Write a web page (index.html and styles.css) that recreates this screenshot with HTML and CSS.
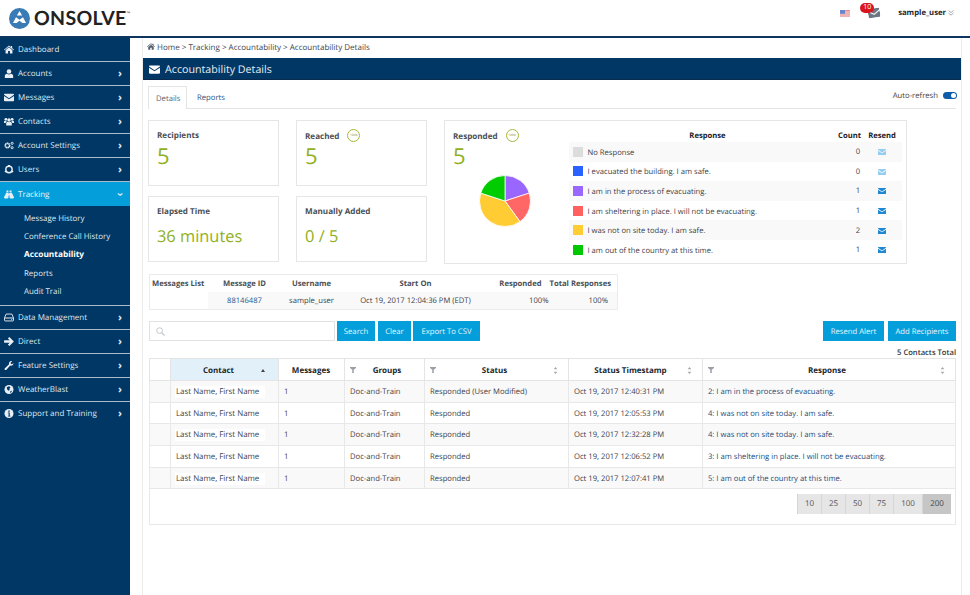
FILE: index.html
```html
<!DOCTYPE html>
<html lang="en">
<head>
<meta charset="utf-8">
<title>Accountability Details</title>
<link rel="stylesheet" href="styles.css">
</head>
<body>
<svg class="defs" width="0" height="0" aria-hidden="true">
  <symbol id="i-mail" viewBox="0 0 16 12"><path d="M0 1.2C0 .5.5 0 1.2 0h13.6c.7 0 1.2.5 1.2 1.2v.5L8 7 0 1.7zM0 3.4V10.800c0 .7.5 1.200 1.200 1.200h13.600c.7 0 1.200-.5 1.200-1.200V3.400L8 8.700z"/></symbol>
  <symbol id="i-home" viewBox="0 0 16 13"><path d="M8 0l3 2.500V1h2v3.200L16 6.700l-.8.9L8 1.700.8 7.600 0 6.700zM2.500 7.500L8 3l5.500 4.500V13H9.500V9h-3v4h-4z"/></symbol>
  <symbol id="i-user" viewBox="0 0 12 13"><circle cx="6" cy="3.500" r="3.300"/><path d="M0 13V9.500C0 8 1.500 7 3 6.700 4 7.500 5 7.800 6 7.800s2-.3 3-1.100c1.500.3 3 1.300 3 2.800V13z"/></symbol>
  <symbol id="i-users" viewBox="0 0 16 13"><circle cx="8" cy="4" r="2.700"/><circle cx="3" cy="3" r="2.200"/><circle cx="13" cy="3" r="2.200"/><path d="M3.500 13V9.500C3.500 8 5 7 6 7c1.300.8 2.700.8 4 0 1 0 2.500 1 2.500 2.500V13zM0 9V7c0-1 .8-1.600 1.600-1.600 1 .6 2 .6 3 .2C4 6.200 3 7.200 2.800 9zM16 9V7c0-1-.8-1.600-1.600-1.600-1 .6-2 .6-3 .2.600.6 1.600 1.600 1.800 3.400z"/></symbol>
  <symbol id="i-cogs" viewBox="0 0 16 13"><circle cx="5.500" cy="6.500" r="3.500" fill="none" stroke="currentColor" stroke-width="2.600" stroke-dasharray="2.200 .5"/><circle cx="13" cy="3" r="1.700" fill="none" stroke="currentColor" stroke-width="1.500"/><circle cx="13" cy="10" r="1.700" fill="none" stroke="currentColor" stroke-width="1.500"/></symbol>
  <symbol id="i-ring" viewBox="0 0 13 13"><circle cx="6.500" cy="6.500" r="4.600" fill="none" stroke="currentColor" stroke-width="2"/><path d="M5 0h3v2.500H5zM0 9l2-1 1 2-2 1zM13 9l-2-1-1 2 2 1z"/></symbol>
  <symbol id="i-binoc" viewBox="0 0 16 13"><path d="M4 0h3v3H4zM9 0h3v3H9zM3.500 3.500h3.700v7.500c0 1-.7 1.800-1.700 1.800H1.500C.5 12.800 0 12 0 11zM9 3.500h3.500L16 11c0 1-.5 1.800-1.500 1.800h-4c-1 0-1.700-.8-1.700-1.800zM7 5h2v3H7z"/></symbol>
  <symbol id="i-hdd" viewBox="0 0 14 11"><path d="M3 .7h8L13.300 6v3.500c0 .5-.4.8-.8.8h-11c-.4 0-.8-.3-.8-.8V6z" fill="none" stroke="currentColor" stroke-width="1.300"/><path d="M1 5.500h12v1.300H1zM10 8h1.500v1H10z"/></symbol>
  <symbol id="i-arrow" viewBox="0 0 13 12"><path d="M7 0l6 6-6 6-2-2 2.500-2.300H0V4.300h7.500L5 2z"/></symbol>
  <symbol id="i-wrench" viewBox="0 0 13 13"><path d="M12.800 2.800c.5 2.200-1.300 4.200-3.500 3.900-.4 0-.8-.1-1.100-.3L2.800 12.500c-.7.7-1.700.7-2.300 0-.6-.6-.6-1.600.1-2.200L6.600 4.800C6 3 7 1 8.800.4 9.500.1 10.300.1 11 .3L8.900 2.400l.4 1.900 1.700.4z"/></symbol>
  <symbol id="i-globe" viewBox="0 0 12 12"><circle cx="6" cy="6" r="6"/><path d="M3 3l3-1.500L8 3 6.500 5 7 6.500 5 7.500 3.500 5.500zM8 8l2-.5L8.500 10.500 7.500 10z" fill="#003764"/></symbol>
  <symbol id="i-info" viewBox="0 0 12 12"><circle cx="6" cy="6" r="6"/><path d="M5 2h2v1.800H5zM4.500 4.800H7V9h1v1H4.500V9h1V5.800h-1z" fill="#003764"/></symbol>
  <symbol id="i-filter" viewBox="0 0 8 8"><path d="M0 0h8v1.300L5 3.500V8H3V3.500L0 1.300z"/></symbol>
  <symbol id="i-sort" viewBox="0 0 6 9"><path d="M3 0l2.400 3H.6zM3 9L.6 6h4.800z"/></symbol>
</svg>

<header class="topbar">
  <div class="logo">
    <svg class="logo-mark" viewBox="0 0 24 24" aria-hidden="true"><circle cx="12" cy="12" r="12" fill="#3a7bb5"/><path d="M12 3.500l3 5.200H9zM8 10.500L4.500 17h4.200l3.300-2.500 3.300 2.500h4.200L16 10.500l-4 3z" fill="#fff"/></svg>
    <span class="logo-text">ONSOLVE</span><span class="logo-tm">™</span>
  </div>
  <div class="top-right">
    <svg class="flag" viewBox="0 0 10 7" aria-hidden="true"><rect width="10" height="7" fill="#e88a8a"/><path d="M0 1.500h10v1H0zM0 3.500h10v1H0zM0 5.500h10v1H0z" fill="#f3dede"/><rect width="5" height="3.800" fill="#6a86c8"/></svg>
    <span class="notif">
      <svg class="notif-mail" aria-hidden="true"><use href="#i-mail"/></svg>
      <span class="badge">10</span>
    </span>
    <span class="top-user">sample_user</span>
    <svg class="top-caret" viewBox="0 0 7 7" aria-hidden="true"><path d="M.5.500l3 2.500 3-2.500M.5 3.500l3 2.500 3-2.500" fill="none" stroke="currentColor" stroke-width=".9"/></svg>
  </div>
</header>

<div class="shell">
  <nav class="sidebar">
    <a class="nav-item"><svg class="nav-icon" aria-hidden="true"><use href="#i-home"/></svg><span class="nav-label">Dashboard</span></a>
    <a class="nav-item"><svg class="nav-icon" aria-hidden="true"><use href="#i-user"/></svg><span class="nav-label">Accounts</span><span class="chev">›</span></a>
    <a class="nav-item"><svg class="nav-icon" aria-hidden="true"><use href="#i-mail"/></svg><span class="nav-label">Messages</span><span class="chev">›</span></a>
    <a class="nav-item"><svg class="nav-icon" aria-hidden="true"><use href="#i-users"/></svg><span class="nav-label">Contacts</span><span class="chev">›</span></a>
    <a class="nav-item"><svg class="nav-icon" aria-hidden="true"><use href="#i-cogs"/></svg><span class="nav-label">Account Settings</span><span class="chev">›</span></a>
    <a class="nav-item"><svg class="nav-icon" aria-hidden="true"><use href="#i-ring"/></svg><span class="nav-label">Users</span><span class="chev">›</span></a>
    <a class="nav-item is-active"><svg class="nav-icon" aria-hidden="true"><use href="#i-binoc"/></svg><span class="nav-label">Tracking</span><span class="chev chev-down">›</span></a>
    <div class="subnav">
      <a class="sub-item">Message History</a>
      <a class="sub-item">Conference Call History</a>
      <a class="sub-item is-current">Accountability</a>
      <a class="sub-item">Reports</a>
      <a class="sub-item">Audit Trail</a>
    </div>
    <a class="nav-item"><svg class="nav-icon" aria-hidden="true"><use href="#i-hdd"/></svg><span class="nav-label">Data Management</span><span class="chev">›</span></a>
    <a class="nav-item"><svg class="nav-icon" aria-hidden="true"><use href="#i-arrow"/></svg><span class="nav-label">Direct</span><span class="chev">›</span></a>
    <a class="nav-item"><svg class="nav-icon" aria-hidden="true"><use href="#i-wrench"/></svg><span class="nav-label">Feature Settings</span><span class="chev">›</span></a>
    <a class="nav-item"><svg class="nav-icon" aria-hidden="true"><use href="#i-globe"/></svg><span class="nav-label">WeatherBlast</span><span class="chev">›</span></a>
    <a class="nav-item no-rule"><svg class="nav-icon" aria-hidden="true"><use href="#i-info"/></svg><span class="nav-label">Support and Training</span><span class="chev">›</span></a>
  </nav>

  <main class="main">
    <div class="crumbs"><svg class="crumb-home" aria-hidden="true"><use href="#i-home"/></svg> Home &gt; Tracking &gt; Accountability &gt; Accountability Details</div>
    <div class="panel">
      <h1 class="title-bar"><svg class="title-icon" aria-hidden="true"><use href="#i-mail"/></svg>Accountability Details</h1>
      <div class="panel-body">
        <div class="tabs">
          <span class="tab is-open">Details</span>
          <span class="tab">Reports</span>
          <span class="auto-refresh">Auto-refresh <span class="toggle"></span></span>
        </div>

        <section class="stats">
          <div class="stat-grid">
            <div class="card"><div class="card-label">Recipients</div><div class="card-num">5</div></div>
            <div class="card"><div class="card-label has-ring">Reached <span class="ring">100%</span></div><div class="card-num">5</div></div>
            <div class="card"><div class="card-label">Elapsed Time</div><div class="card-val">36 minutes</div></div>
            <div class="card"><div class="card-label">Manually Added</div><div class="card-val">0 / 5</div></div>
          </div>
          <div class="card card-wide">
            <div class="pie-side">
              <div class="card-label has-ring">Responded <span class="ring">100%</span></div>
              <div class="card-num">5</div>
              <svg class="pie" viewBox="-26 -26 52 52" aria-hidden="true">
                <g stroke="#fff" stroke-width=".8">
                  <path d="M0 0L0-25.500A25.500 25.500 0 0 1 24.250-7.880z" fill="#9966ff"/>
                  <path d="M0 0L24.250-7.880A25.500 25.500 0 0 1 14.990 20.630z" fill="#ff6666"/>
                  <path d="M0 0L14.990 20.630A25.500 25.500 0 0 1-24.250-7.880z" fill="#ffcc33"/>
                  <path d="M0 0L-24.250-7.880A25.500 25.500 0 0 1 0-25.500z" fill="#00cc00"/>
                </g>
              </svg>
            </div>
            <div class="legend">
              <div class="lg-head"><span class="lg-main">Response</span><span class="lg-count">Count</span><span class="lg-send">Resend</span></div>
              <div class="lg-row"><span class="lg-main"><span class="swatch sw-none"></span>No Response</span><span class="lg-count">0</span><span class="lg-send"><svg class="env env-off" aria-hidden="true"><use href="#i-mail"/></svg></span></div>
              <div class="lg-row"><span class="lg-main"><span class="swatch sw-blue"></span>I evacuated the building. I am safe.</span><span class="lg-count">0</span><span class="lg-send"><svg class="env env-off" aria-hidden="true"><use href="#i-mail"/></svg></span></div>
              <div class="lg-row"><span class="lg-main"><span class="swatch sw-purple"></span>I am in the process of evacuating.</span><span class="lg-count">1</span><span class="lg-send"><svg class="env" aria-hidden="true"><use href="#i-mail"/></svg></span></div>
              <div class="lg-row"><span class="lg-main"><span class="swatch sw-red"></span>I am sheltering in place. I will not be evacuating.</span><span class="lg-count">1</span><span class="lg-send"><svg class="env" aria-hidden="true"><use href="#i-mail"/></svg></span></div>
              <div class="lg-row"><span class="lg-main"><span class="swatch sw-yellow"></span>I was not on site today. I am safe.</span><span class="lg-count">2</span><span class="lg-send"><svg class="env" aria-hidden="true"><use href="#i-mail"/></svg></span></div>
              <div class="lg-row"><span class="lg-main"><span class="swatch sw-green"></span>I am out of the country at this time.</span><span class="lg-count">1</span><span class="lg-send"><svg class="env" aria-hidden="true"><use href="#i-mail"/></svg></span></div>
            </div>
          </div>
        </section>

        <table class="msg-list">
          <thead><tr><th class="ml-a">Messages List</th><th class="ml-b">Message ID</th><th class="ml-c">Username</th><th class="ml-d">Start On</th><th class="ml-e">Responded</th><th class="ml-f">Total Responses</th></tr></thead>
          <tbody><tr><td class="ml-blank"></td><td class="ml-link">88146487</td><td>sample_user</td><td>Oct 19, 2017 12:04:36 PM (EDT)</td><td class="ml-pct1">100%</td><td class="ml-pct2">100%</td></tr></tbody>
        </table>

        <div class="toolbar">
          <div class="search"><svg class="search-icon" viewBox="0 0 10 10" aria-hidden="true"><circle cx="4" cy="4" r="3.200" fill="none" stroke="currentColor" stroke-width="1"/><path d="M6.300 6.300L9.500 9.500" stroke="currentColor" stroke-width="1.300"/></svg></div>
          <button class="btn btn-search">Search</button>
          <button class="btn btn-clear">Clear</button>
          <button class="btn btn-export">Export To CSV</button>
          <span class="spacer"></span>
          <button class="btn btn-resend">Resend Alert</button>
          <button class="btn btn-add">Add Recipients</button>
        </div>
        <div class="total">5 Contacts Total</div>

        <div class="grid-wrap">
          <table class="grid">
            <colgroup><col class="c0"><col class="c1"><col class="c2"><col class="c3"><col class="c4"><col class="c5"><col class="c6"></colgroup>
            <thead>
              <tr>
                <th></th>
                <th class="is-sorted"><div class="th-in"><span class="th-text">Contact</span><span class="sort-up"></span></div></th>
                <th><div class="th-in"><span class="th-text">Messages</span></div></th>
                <th><div class="th-in"><svg class="flt" aria-hidden="true"><use href="#i-filter"/></svg><span class="th-text">Groups</span></div></th>
                <th><div class="th-in"><svg class="flt" aria-hidden="true"><use href="#i-filter"/></svg><span class="th-text">Status</span><svg class="srt" aria-hidden="true"><use href="#i-sort"/></svg></div></th>
                <th><div class="th-in"><span class="th-text">Status Timestamp</span><svg class="srt" aria-hidden="true"><use href="#i-sort"/></svg></div></th>
                <th><div class="th-in"><svg class="flt" aria-hidden="true"><use href="#i-filter"/></svg><span class="th-text">Response</span><svg class="srt" aria-hidden="true"><use href="#i-sort"/></svg></div></th>
              </tr>
            </thead>
            <tbody>
              <tr><td></td><td><span class="masked">Last Name, First Name</span></td><td>1</td><td>Doc-and-Train</td><td>Responded (User Modified)</td><td>Oct 19, 2017 12:40:31 PM</td><td class="resp">2: I am in the process of evacuating.</td></tr>
              <tr><td></td><td><span class="masked">Last Name, First Name</span></td><td>1</td><td>Doc-and-Train</td><td>Responded</td><td>Oct 19, 2017 12:05:53 PM</td><td class="resp">4: I was not on site today. I am safe.</td></tr>
              <tr><td></td><td><span class="masked">Last Name, First Name</span></td><td>1</td><td>Doc-and-Train</td><td>Responded</td><td>Oct 19, 2017 12:32:28 PM</td><td class="resp">4: I was not on site today. I am safe.</td></tr>
              <tr><td></td><td><span class="masked">Last Name, First Name</span></td><td>1</td><td>Doc-and-Train</td><td>Responded</td><td>Oct 19, 2017 12:06:52 PM</td><td class="resp">3: I am sheltering in place. I will not be evacuating.</td></tr>
              <tr><td></td><td><span class="masked">Last Name, First Name</span></td><td>1</td><td>Doc-and-Train</td><td>Responded</td><td>Oct 19, 2017 12:07:41 PM</td><td class="resp">5: I am out of the country at this time.</td></tr>
            </tbody>
          </table>
          <div class="pager">
            <span class="pg">10</span><span class="pg">25</span><span class="pg">50</span><span class="pg">75</span><span class="pg pg-100">100</span><span class="pg pg-100 is-on">200</span>
          </div>
        </div>
      </div>
    </div>
  </main>
</div>
</body>
</html>
```

FILE: styles.css
```css
* { box-sizing: border-box; }
html, body { margin: 0; padding: 0; height: 595px; overflow: hidden; background: #fff; }
body { font-family: "Open Sans", "Liberation Sans", sans-serif; font-size: 7.7px; color: #333; text-rendering: geometricPrecision; }
svg { fill: currentColor; }
.defs { position: absolute; }

.topbar { height: 38px; display: flex; align-items: center; justify-content: space-between; border-bottom: 2px solid #0d3560; padding: 0 16px 0 9px; }
.logo { display: flex; align-items: center; margin-top: 1px; }
.logo-mark { width: 21px; height: 21px; margin-right: 4px; }
.logo-text { font-family: Lato, "Open Sans", sans-serif; font-size: 19.500px; font-weight: 700; letter-spacing: .3px; color: #222; line-height: 1; }
.logo-tm { font-size: 5px; align-self: flex-start; margin-top: 3px; color: #444; }
.top-right { display: flex; align-items: center; height: 26px; align-self: flex-start; }
.flag { width: 10px; height: 7px; margin-right: 18px; }
.notif { position: relative; width: 12px; height: 10px; margin-right: 18px; }
.notif-mail { width: 12px; height: 10px; color: #6d7784; display: block; transform: rotate(-8deg); }
.badge { position: absolute; left: -8px; top: -5px; width: 14px; height: 10px; border-radius: 5px; background: #d9141e; color: #fff; font-size: 7px; line-height: 10px; text-align: center; }
.top-user { font-size: 7.700px; font-weight: 700; color: #1b2430; }
.top-caret { width: 6px; height: 6px; color: #8a94a0; margin-left: 2px; }

.shell { display: flex; height: 557px; }
.sidebar { width: 130px; flex: none; background: #003764; color: #dfe8f0; padding-bottom: 20px; }
.nav-item { display: flex; align-items: center; height: 24px; padding: 0 0 0 4px; border-bottom: 1px solid #a9bccd; font-size: 8px; }
.nav-item.is-active { background: #049fdb; color: #e8f6fc; border-bottom: 0; }
.nav-item.no-rule { border-bottom: 0; }
.nav-icon { width: 10px; height: 9px; margin-right: 4px; color: #e8eef4; flex: none; }
.nav-label { flex: 1; white-space: nowrap; }
.chev { width: 12px; flex: none; font-size: 11px; font-weight: 700; line-height: 1; color: #dfe8f0; }
.chev-down { display: inline-block; transform: rotate(90deg); text-align: center; width: 8px; margin-right: 6px; }
.subnav { padding: 4px 0 4px 24px; border-bottom: 1px solid #a9bccd; }
.sub-item { display: block; height: 18.200px; line-height: 18.200px; font-size: 7.900px; color: #dfe8f0; white-space: nowrap; }
.sub-item.is-current { font-weight: 700; color: #fff; font-size: 8.300px; }

.main { flex: 1; min-width: 0; padding-left: 12px; }
.panel, .crumbs { width: 820px; }
.crumbs { height: 20px; padding: 3px 0 0 4px; line-height: 14px; font-size: 8px; color: #3c4650; border-left: 1px solid #ececec; border-right: 1px solid #ececec; }
.crumb-home { width: 8px; height: 7px; color: #56606a; }
.panel { height: 540px; border-left: 1px solid #ececec; border-right: 1px solid #ececec; }
.title-bar { margin: 0; height: 22px; background: #003764; color: #e6edf3; font-size: 10.700px; font-weight: 400; display: flex; align-items: center; padding: 2px 0 0 6px; border-bottom: 1px solid #0b2b4e; }
.title-icon { width: 11px; height: 9px; margin-right: 5px; color: #fff; }
.panel-body { padding: 6px 5px 0 5px; }

.tabs { display: flex; align-items: flex-end; height: 23px; border-bottom: 1px solid #e4e4e4; position: relative; }
.tab { height: 22px; line-height: 24px; padding: 0 10px; font-size: 7.700px; color: #2b5580; }
.tab.is-open { border: 1px solid #e4e4e4; border-bottom: 0; background: #fff; color: #5a6672; height: 23px; margin-bottom: -1px; width: 39px; padding: 0 7px; }
.auto-refresh { margin-left: auto; margin-right: -1px; align-self: center; font-size: 7.700px; color: #444; display: flex; align-items: center; padding-bottom: 3px; }
.toggle { display: block; position: relative; width: 14px; height: 7px; border-radius: 4px; background: #0f5ca8; margin-left: 5px; }
.toggle::after { content: ""; position: absolute; right: 1px; top: 1px; width: 5px; height: 5px; border-radius: 50%; background: #fff; }

.stats { display: flex; margin-top: 11px; align-items: flex-start; }
.stat-grid { display: grid; grid-template-columns: 131px 131px; grid-auto-rows: 66px; column-gap: 17px; row-gap: 10px; }
.card { border: 1px solid #e6e6e6; padding: 8px 8px 0; background: #fff; }
.card-label { font-size: 8.100px; font-weight: 700; color: #4a4f55; display: flex; align-items: center; height: 13px; }
.card-label.has-ring { align-items: flex-end; line-height: 10px; }
.ring { display: inline-block; width: 13px; height: 13px; border: 1px solid #a5b938; border-radius: 50%; font-size: 3px; line-height: 11px; text-align: center; color: #7a8a30; margin-left: 8px; font-weight: 400; align-self: center; }
.card-num { font-size: 22px; line-height: 28px; color: #8fb021; }
.card-val { font-size: 16.400px; line-height: 34px; color: #8fb021; margin-top: 1px; }
.card-wide { margin-left: 17px; width: 463px; height: 144px; display: flex; padding: 8px 4px 0 8px; }
.pie-side { width: 116px; flex: none; }
.pie { display: block; width: 52px; height: 52px; margin: 5px 0 0 26px; }
.legend { width: 334px; font-size: 7.650px; color: #3c4148; }
.lg-head { display: flex; height: 13px; align-items: center; font-weight: 700; color: #1c2127; padding-top: 1px; }
.lg-head .lg-main { text-align: center; padding-left: 13px; }
.lg-row { display: flex; height: 19.600px; align-items: center; padding-top: 1px; }
.lg-row:nth-child(even) { background: #f9f9f9; }
.lg-main { flex: 1; padding-left: 4px; white-space: nowrap; display: block; }
.lg-count { width: 28px; text-align: right; }
.lg-row .lg-count { padding-right: 1px; }
.lg-send { width: 41px; text-align: center; padding-left: 1px; }
.swatch { display: inline-block; width: 10px; height: 10px; margin-right: 4.500px; vertical-align: -2px; }
.sw-none { background: #dcdcdc; }
.sw-blue { background: #2962ff; }
.sw-purple { background: #9966ff; }
.sw-red { background: #ff6060; }
.sw-yellow { background: #ffcc33; }
.sw-green { background: #00c800; }
.env { width: 8px; height: 6px; color: #1e88d2; display: block; margin: 0 auto; }
.env-off { color: #93cdf0; }

.msg-list { margin: 10px 0 0 1px; width: 469px; height: 36px; border-collapse: collapse; table-layout: fixed; border: 1px solid #ececec; font-size: 7.650px; }
.msg-list th { font-weight: 700; color: #4a4f55; height: 17px; padding: 1px 0 0; text-align: center; white-space: nowrap; }
.msg-list td { background: #f9f9f9; text-align: center; padding: 1px 0 0; color: #3c4148; white-space: nowrap; }
.msg-list .ml-blank { background: #fff; }
.ml-a { width: 58px; text-align: left !important; padding-left: 2px !important; }
.ml-b { width: 74px; }
.ml-c { width: 60px; }
.ml-d { width: 148px; }
.ml-e { width: 60px; text-align: right !important; padding-right: 8px !important; }
.ml-f { text-align: right !important; padding-right: 7px !important; }
.msg-list .ml-link { color: #1f5a8e; }
.msg-list .ml-pct1 { text-align: right; padding-right: 1px; }
.msg-list .ml-pct2 { text-align: right; padding-right: 9px; }

.toolbar { display: flex; align-items: stretch; height: 20px; margin: 11px 0 0 1px; }
.search { width: 186px; border: 1px solid #e2e2e2; display: flex; align-items: center; padding-left: 6px; margin-right: 2px; background: #fff; }
.search-icon { width: 9px; height: 9px; color: #bcc2c8; }
.btn { border: 0; background: #049fdb; color: #e6f6fd; font: 7.700px "Open Sans", sans-serif; text-rendering: geometricPrecision; padding: 1px 0 0; height: 20px; flex: none; }
.btn-search { width: 38px; margin-right: 3px; }
.btn-clear { width: 33px; margin-right: 2px; }
.btn-export { width: 67px; }
.btn-resend { width: 61px; margin-right: 4px; }
.btn-add { width: 68px; }
.spacer { flex: 1; }

.total { text-align: right; font-size: 7.600px; font-weight: 600; color: #333; height: 17px; line-height: 25px; }
.grid-wrap { margin-left: 1px; border: 1px solid #e8e8e8; border-top: 0; height: 167px; }
.grid { width: 807px; margin-left: -1px; border-collapse: collapse; table-layout: fixed; font-size: 7.650px; }
.c0 { width: 21px; } .c1 { width: 108px; } .c2 { width: 66px; } .c3 { width: 80px; } .c4 { width: 144px; } .c5 { width: 134px; }
.grid th { height: 22px; padding: 0; border: 1px solid #e4e4e4; background: #fff; font-size: 8px; font-weight: 700; color: #23282e; }
.grid th.is-sorted { background: #e2f1f9; }
.th-in { display: flex; align-items: center; padding: 1px 6px 0 5px; height: 100%; }
.th-text { flex: 1; text-align: center; white-space: nowrap; }
.flt { width: 6px; height: 6px; color: #9aa0a6; flex: none; }
.srt { width: 5px; height: 7px; color: #a4a9ae; flex: none; margin-right: 4px; }
.sort-up { width: 0; height: 0; border-left: 2.500px solid transparent; border-right: 2.500px solid transparent; border-bottom: 3px solid #444; margin-right: 7px; }
.grid td { height: 21.700px; padding: 1px 4px 0 5px; border: 1px solid #e8e8e8; white-space: nowrap; color: #3c4148; background: #fff; }
.grid tbody tr:nth-child(odd) td { background: #f9f9f9; }
.masked { background: #fff; padding: 1px 6px 1px 1px; margin-left: -1px; font-size: 7.900px; }
.grid tbody tr td.resp { color: #1d4a78; }

.pager { display: flex; justify-content: flex-end; margin: 5px 4px 0 0; }
.pg { width: 24px; height: 20px; line-height: 20px; text-align: center; background: #e6e6e6; border-left: 1px solid #d5d5d5; font-size: 8px; color: #555; }
.pg-100 { width: 29px; }
.pg.is-on { background: #c6c6c6; color: #444; }
```
